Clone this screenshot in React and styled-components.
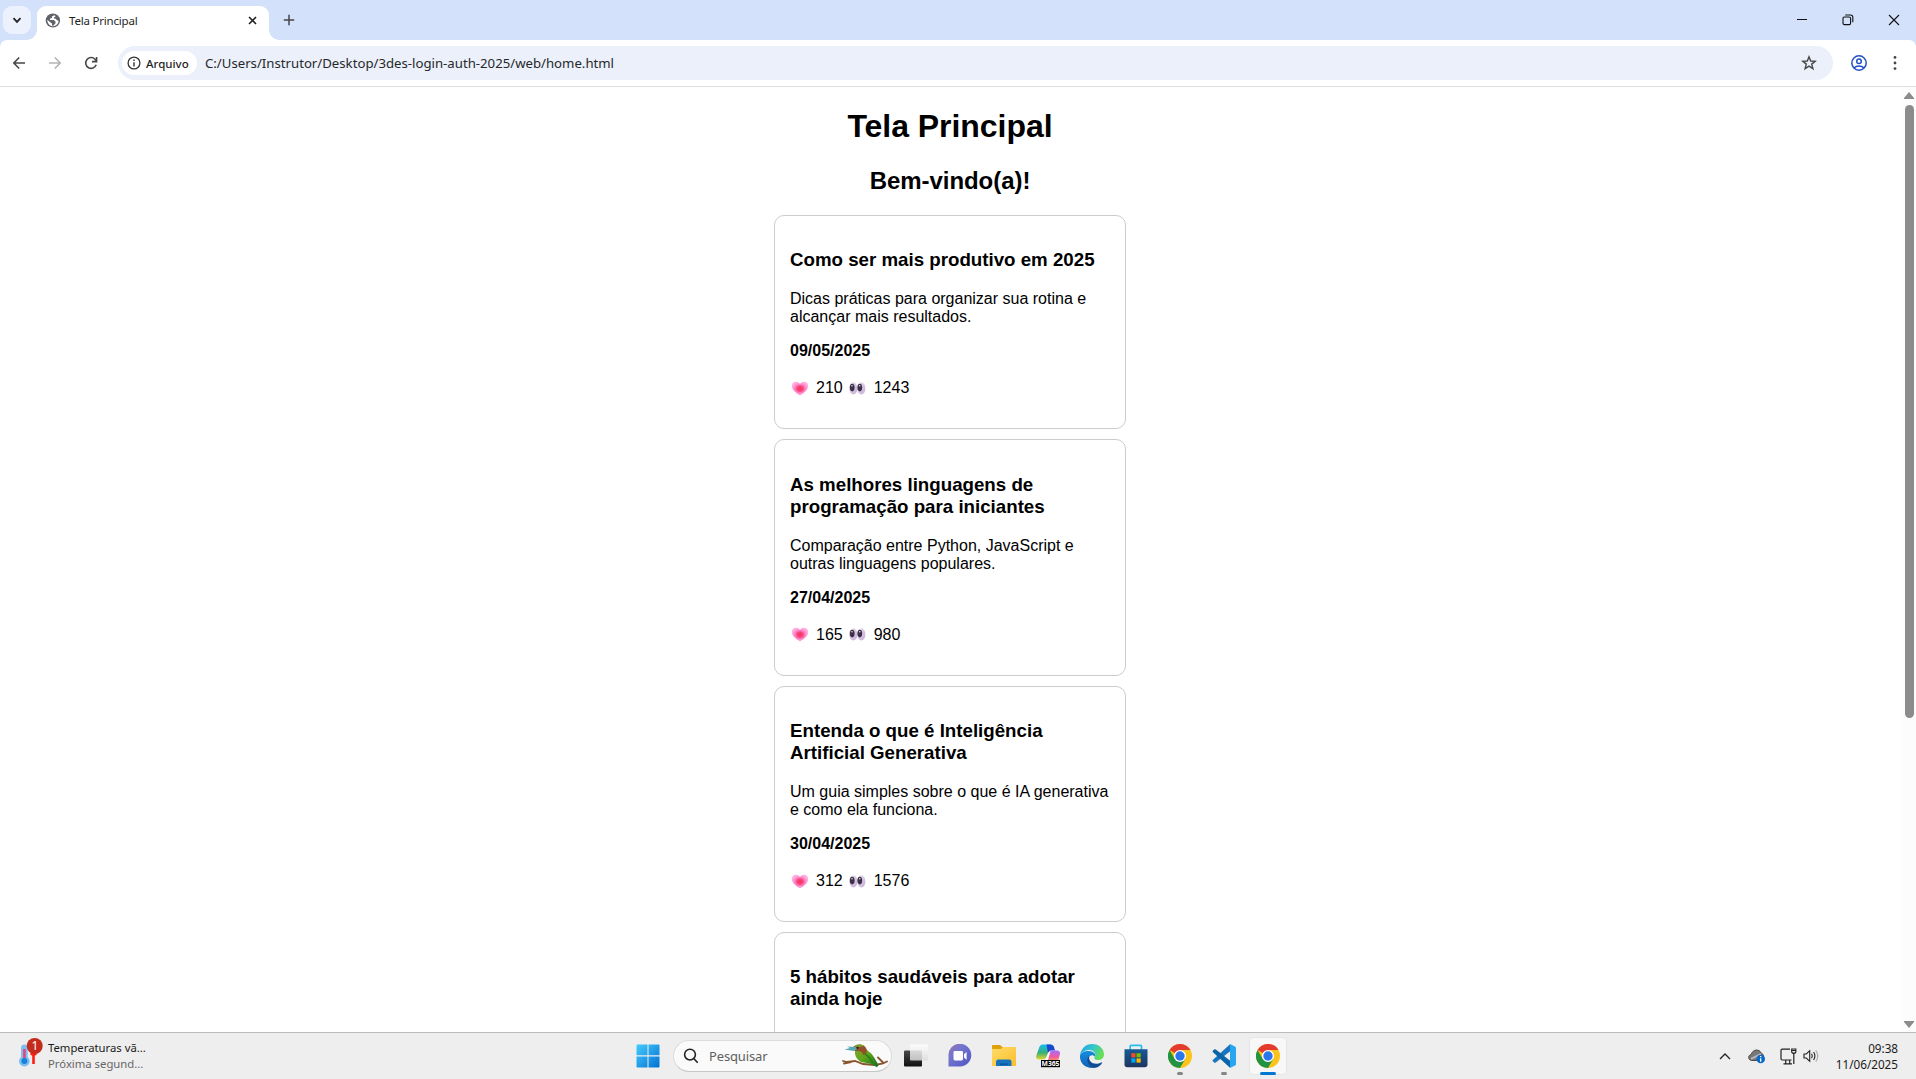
import React from "react";
import styled, { createGlobalStyle, css } from "styled-components";

const Global = createGlobalStyle`
  * { box-sizing: border-box; }
  html, body, #root { margin: 0; height: 100%; overflow: hidden; }
  body { background: #fff; font-family: "Liberation Sans", Arial, sans-serif; }
  svg { display: block; flex: none; }
`;

const ui = css`font-family: "Noto Sans", "Open Sans", sans-serif;`;

const Screen = styled.div`
  width: 1916px;
  height: 1079px;
  display: flex;
  flex-direction: column;
  overflow: hidden;
  background: #d3e1fb;
`;

/* Browser chrome */
const TabStrip = styled.div`
  ${ui}
  height: 40px;
  flex: none;
  display: flex;
  padding-left: 3px;
`;
const TabSearch = styled.div`
  width: 28px;
  height: 28px;
  margin-top: 6px;
  border-radius: 9px;
  background: #ecf2fd;
  display: grid;
  place-items: center;
`;
const Tab = styled.div`
  position: relative;
  width: 232px;
  height: 34px;
  margin: 6px 0 0 6px;
  padding: 0 12px 6px 8px;
  background: #fff;
  border-radius: 9px 9px 0 0;
  display: flex;
  align-items: center;
  &::before, &::after {
    content: "";
    position: absolute;
    bottom: 0;
    width: 10px;
    height: 10px;
  }
  &::before { left: -10px; background: radial-gradient(circle at 0 0, transparent 9.5px, #fff 10px); }
  &::after { right: -10px; background: radial-gradient(circle at 100% 0, transparent 9.5px, #fff 10px); }
`;
const TabTitle = styled.span`
  flex: 1;
  margin-left: 8px;
  font-size: 11.5px;
  line-height: 16px;
  letter-spacing: -0.2px;
  color: #1f1f1f;
  padding-top: 2px;
`;
const NewTab = styled.div`
  margin: 14px 0 0 14px;
`;
const WindowControls = styled.div`
  margin-left: auto;
  display: flex;
  gap: 34px;
  padding: 14px 16px 0 0;
`;
const Toolbar = styled.div`
  ${ui}
  height: 47px;
  flex: none;
  display: flex;
  align-items: center;
  border-bottom: 1px solid #dfdfe0;
  border-radius: 7px 7px 0 0;
  padding: 0 19px 0 11px;
  background: #fff;
`;
const ToolIcons = styled.div`
  display: flex;
  gap: 20px;
  width: 107px;
  flex: none;
`;
const Omnibox = styled.div`
  flex: 1;
  height: 34px;
  border-radius: 17px;
  background: #ebf0fa;
  display: flex;
  align-items: center;
  padding: 0 16px 0 4px;
`;
const SchemeChip = styled.span`
  height: 24px;
  width: 75px;
  border-radius: 12px;
  background: #fff;
  display: flex;
  align-items: center;
  gap: 5px;
  padding-left: 5px;
  font-size: 11.5px;
  font-weight: 500;
  color: #1f1f1f;
`;
const Url = styled.span`
  flex: 1;
  margin-left: 8px;
  font-size: 13.2px;
  color: #27282a;
`;
const Profile = styled.div`
  margin: 0 26px 0 18px;
`;

/* Page */
const Viewport = styled.div`
  flex: 1;
  min-height: 0;
  display: flex;
  background: #fff;
`;
const Main = styled.main`
  flex: 1;
  display: flex;
  flex-direction: column;
  align-items: center;
  overflow: hidden;
  padding-right: 2px;
  color: #000;
`;
const Title = styled.h1`
  font-size: 32px;
  line-height: 36px;
  letter-spacing: -0.05px;
  margin: 21px 0 0;
`;
const Welcome = styled.h2`
  font-size: 24px;
  line-height: 27px;
  letter-spacing: -0.05px;
  margin: 23px 0 21px;
`;
const Cards = styled.div`
  display: flex;
  flex-direction: column;
  gap: 10px;
  width: 352px;
`;
const Card = styled.article`
  border: 1px solid #ccc;
  border-radius: 10px;
  padding: 15px;
  flex: none;
`;
const CardTitle = styled.h3`
  font-size: 18.72px;
  line-height: 22px;
  margin: 18.2px 0 19.24px;
`;
const Text = styled.p`
  font-size: 16px;
  line-height: 18px;
  margin: 0 0 16px;
`;
const DateText = styled(Text)`
  font-weight: bold;
`;
const Stats = styled(Text)`
  display: flex;
  align-items: center;
  padding-top: 2px;
  line-height: 19px;
`;
const Count = styled.span`
  margin: 0 5px;
`;
const Scrollbar = styled.div`
  width: 14px;
  background: #fcfcfc;
  display: flex;
  flex-direction: column;
  align-items: center;
  padding: 5px 0 4px;
`;
const Thumb = styled.div`
  width: 9px;
  height: 613px;
  margin: 6px 0 auto;
  border-radius: 5px;
  background: #8b8b8b;
`;

/* Taskbar */
const Taskbar = styled.footer`
  ${ui}
  height: 47px;
  flex: none;
  display: grid;
  grid-template-columns: 626px 664px 1fr;
  border-top: 1px solid #bcbcbc;
  background: #eee;
`;
const Weather = styled.div`
  display: flex;
  padding: 5px 0 0 17px;
  gap: 4px;
`;
const Lines = styled.div`
  display: flex;
  flex-direction: column;
  font-size: ${(p) => (p.$clock ? 11.7 : 11.3)}px;
  line-height: 16px;
  padding-top: ${(p) => (p.$clock ? 0 : 2)}px;
  margin-top: ${(p) => (p.$clock ? -1 : 0)}px;
  white-space: nowrap;
  color: #1b1b1b;
  text-align: ${(p) => (p.$clock ? "right" : "left")};
`;
const Muted = styled.span`
  color: #666;
`;
const Apps = styled.div`
  display: flex;
  align-items: center;
`;
const AppSlot = styled.div`
  position: relative;
  width: 44px;
  height: 46px;
  flex: none;
  display: grid;
  place-items: center;
`;
const ActiveTile = styled.div`
  width: 38px;
  height: 38px;
  border-radius: 4px;
  background: #f8f8f8;
  border: 1px solid #e6e6e6;
  display: grid;
  place-items: center;
`;
const Indicator = styled.i`
  position: absolute;
  bottom: 4px;
  left: 50%;
  transform: translateX(-50%);
  width: ${(p) => (p.$active ? 16 : 6)}px;
  height: 3px;
  border-radius: 2px;
  background: ${(p) => (p.$active ? "#0078d4" : "#858585")};
`;
const Search = styled.div`
  width: 219px;
  height: 32px;
  margin: 0 2px 0 3px;
  border: 1px solid #dcdcdc;
  border-bottom-color: #c6c6c6;
  border-radius: 16px;
  background: #fafafa;
  display: flex;
  align-items: center;
  padding: 0 3px 0 9px;
`;
const Placeholder = styled.span`
  flex: 1;
  margin-left: 10px;
  font-size: 13px;
  letter-spacing: -0.15px;
  color: #606060;
`;
const Tray = styled.div`
  display: flex;
  justify-content: flex-end;
  align-items: center;
  padding-right: 18px;
`;
const TrayIcons = styled.div`
  display: flex;
  align-items: center;
  margin-right: 16px;
`;
const TraySlot = styled.div`
  margin-left: ${(p) => p.$gap || 0}px;
`;

const Heart = () => (
  <svg width="21" height="18" viewBox="0.5 0 21 18">
    <defs>
      <radialGradient id="heart">
        <stop offset="0" stopColor="#f5305c" />
        <stop offset=".4" stopColor="#f84a82" />
        <stop offset=".6" stopColor="#ff7fc4" />
        <stop offset="1" stopColor="#ffb0e0" />
      </radialGradient>
    </defs>
    <path d="M10.5 16.5C7 14.2 2.3 11.2 2.3 7C2.3 2.4 7.8 1.4 10.5 4.8C13.2 1.4 18.7 2.4 18.7 7C18.7 11.2 14 14.2 10.5 16.5Z" fill="url(#heart)" />
  </svg>
);
const Eyes = () => (
  <svg width="21" height="18" viewBox="1 0 21 18">
    <defs>
      <linearGradient id="eye" x2="1" y2="1">
        <stop offset="0" stopColor="#eee8f2" />
        <stop offset="1" stopColor="#c4a8d6" />
      </linearGradient>
    </defs>
    <ellipse cx="6.3" cy="9.4" rx="4.1" ry="6.1" fill="url(#eye)" />
    <ellipse cx="14.3" cy="9.4" rx="4.1" ry="6.1" fill="url(#eye)" />
    <ellipse cx="5.2" cy="8.6" rx="2.4" ry="3.8" fill="#3c3048" />
    <ellipse cx="12.8" cy="8.6" rx="2.4" ry="3.8" fill="#3c3048" />
    <circle cx="5" cy="6.8" r=".7" fill="#fff" />
    <circle cx="12.8" cy="6.8" r=".7" fill="#fff" />
  </svg>
);

const Line = ({ w = 16, h = w, box = `0 0 ${w} ${h}`, color = "#474747", sw = 1.6, d }) => (
  <svg width={w} height={h} viewBox={box} fill="none" stroke={color} strokeWidth={sw}>
    <path d={d} />
  </svg>
);

const Globe = () => (
  <svg width="16" height="15" viewBox="-.6 0 14 15" preserveAspectRatio="none">
    <ellipse cx="6.3" cy="7.5" rx="6.3" ry="7" fill="#5f6368" />
    <path d="M7.6 2.2L5.4 3.5L5.5 5L3.8 5.5V7H7L8.6 8.5V10.3L6.8 12.6L5.5 12.7V10.5L4 9.3L1.4 6.8C1.4 9.9 3 12.9 6 13.2C9.4 13.2 11.2 10.5 11.3 8L9.5 6.8L8.5 5.5H7.2V4.4L8.8 3.3Z" fill="#fff" />
  </svg>
);
const Info = () => (
  <svg width="14" height="14" viewBox="0 0 14 14">
    <circle cx="7" cy="7" r="5.9" fill="none" stroke="#333" strokeWidth="1.3" />
    <path d="M7 6.3V10.4M7 3.6V5" stroke="#333" strokeWidth="1.4" />
  </svg>
);
const UserIcon = () => (
  <svg width="16" height="16" viewBox="0 0 16 16" fill="none" stroke="#2350c4" strokeWidth="1.5">
    <circle cx="8" cy="8" r="7.2" />
    <circle cx="8" cy="6.2" r="2.3" />
    <path d="M3 13C5.5 10.4 10.5 10.4 13 13" />
  </svg>
);
const Kebab = () => (
  <svg width="4" height="16" viewBox="0 0 4 16" fill="#474747">
    <circle cx="2" cy="2.4" r="1.4" /><circle cx="2" cy="8" r="1.4" /><circle cx="2" cy="13.6" r="1.4" />
  </svg>
);
const RestoreIcon = () => (
  <svg width="12" height="12" viewBox="0 0 12 12" fill="none" stroke="#111" strokeWidth="1.1">
    <rect x="1" y="3" width="7.6" height="7.6" rx="1.3" />
    <path d="M3.2 1H8.6A2.2 2.2 0 0 1 10.8 3.2V8.3" />
  </svg>
);

const Thermo = () => (
  <svg width="27" height="32" viewBox="0 0 27 32">
    <path d="M4 10Q4 6.5 7.3 6.5Q10.7 6.5 10.7 10V19A5.3 5.3 0 1 1 4 19Z" fill="#7dbdf2" />
    <path d="M7.4 11V23" stroke="#e4467c" strokeWidth="2.6" />
    <circle cx="7.4" cy="23" r="3" fill="#1584da" />
    <path d="M16.5 14V26M14 17L16.5 13.5L19 17" stroke="#ff1e10" strokeWidth="2.6" fill="none" />
    <circle cx="17.7" cy="8" r="8" fill="#c42b1c" />
    <text x="18" y="12.4" fontSize="12" fill="#fff" textAnchor="middle" fontFamily="Noto Sans, sans-serif">1</text>
  </svg>
);
const Windows = () => (
  <svg width="24" height="24" viewBox="0 0 24 24">
    <defs><linearGradient id="win" gradientUnits="userSpaceOnUse" x1="0" y1="0" x2="24" y2="24"><stop stopColor="#46cdff" /><stop offset="1" stopColor="#006fd0" /></linearGradient></defs>
    <path d="M1.5 .5H11.5V11.3H.5V1.5Q.5.5 1.5.5ZM12.5.5H22.5Q23.5.5 23.5 1.5V11.3H12.5ZM.5 12.4H11.5V23.5H1.5Q.5 23.5.5 22.5ZM12.5 12.4H23.5V22.5Q23.5 23.5 22.5 23.5H12.5Z" fill="url(#win)" />
  </svg>
);
const Bird = () => (
  <svg width="46" height="24" viewBox="0 0 46 24">
    <defs><linearGradient id="bird" x2="1" y2="1"><stop stopColor="#8ba326" /><stop offset=".45" stopColor="#5ea51c" /><stop offset="1" stopColor="#126a20" /></linearGradient></defs>
    <path d="M1 17L5 18L13 17L21 20L33 21L41 19.5L45 17.5M2 19.5L9 18M36 13.5L41 18.5" stroke="#8a542f" strokeWidth="1.8" fill="none" strokeLinecap="round" />
    <path d="M13 6C17 2 24 3 26 7C31 10 33 15 36.5 21L35 23.3L31 21C28 19 23 19 19 18C14 15 12.5 11 13 6Z" fill="url(#bird)" />
    <path d="M11 3C15 0 22 0 24 4C26 8 24 11 21 11C21 7 17 7 13 7Z" fill="#92502c" />
    <path d="M13 1.5C16-.3 20 0 22 2L18 3L13 3Z" fill="#7b9b2e" />
    <path d="M14 3L5 2.5L8 4L2.5 5.5L12 7L15 5Z" fill="#56a8b5" />
    <circle cx="15.5" cy="3.8" r="1.1" fill="#221d17" />
    <path d="M23 10C27 12 28 15 31 19" stroke="#2e7b18" strokeWidth="1.5" fill="none" />
  </svg>
);
const TaskView = () => (
  <svg width="24" height="24" viewBox="0 0 24 24">
    <defs>
      <linearGradient id="tv" x2="0" y2="1"><stop stopColor="#484848" /><stop offset="1" stopColor="#111" /></linearGradient>
      <linearGradient id="tvf" x2="0" y2="1"><stop stopColor="#fff" /><stop offset="1" stopColor="#dcdcdc" /></linearGradient>
    </defs>
    <rect x="0" y="6.5" width="18" height="16" rx="1" fill="url(#tv)" />
    <rect x="6" y="0.5" width="18" height="16" rx="1" fill="url(#tvf)" opacity=".85" />
  </svg>
);
const Chat = () => (
  <svg width="24" height="24" viewBox="0 0 24 24">
    <defs><linearGradient id="chat" x2="1" y2="1"><stop stopColor="#9971a8" /><stop offset=".35" stopColor="#7377cd" /><stop offset="1" stopColor="#5052c4" /></linearGradient></defs>
    <path d="M.5 22.5V12A11.4 11.4 0 1 1 12 22.5Z" fill="url(#chat)" />
    <rect x="5.5" y="7" width="9.5" height="9.5" rx="1.4" fill="#fff" />
    <path d="M16 10.3L18.6 8V15.7L16 13.4Z" fill="#fff" />
  </svg>
);
const Folder = () => (
  <svg width="24" height="24" viewBox="0 0 24 24">
    <defs><linearGradient id="fold" x2="1" y2="1"><stop stopColor="#ffdc68" /><stop offset="1" stopColor="#fbbd2c" /></linearGradient></defs>
    <path d="M0 2Q0 1 1 1H8L10.5 3H24V10H0Z" fill="#e0a008" />
    <path d="M0 5H9L11 3H24V22H0Z" fill="url(#fold)" />
    <path d="M4 22V17.8Q4 15.5 6.3 15.5H17.2Q19.5 15.5 19.5 17.8V22Z" fill="#1673bd" />
    <path d="M8 20.2H15.5" stroke="#0b559f" strokeWidth="1.5" />
  </svg>
);
const M365 = () => (
  <svg width="24" height="24" viewBox="0 0 24 24">
    <defs>
      <linearGradient id="m1" x2="0" y2="1"><stop stopColor="#18bdf4" /><stop offset=".55" stopColor="#37af76" /><stop offset="1" stopColor="#e6d62b" /></linearGradient>
      <linearGradient id="m2" x2="0" y2="1"><stop stopColor="#a66dfa" /><stop offset=".6" stopColor="#ef5aa3" /><stop offset="1" stopColor="#ff9950" /></linearGradient>
    </defs>
    <path d="M6.5.5H15L11 12Q10 15.5 6 15.5H3Q-1 15.5.5 11L3 4Q4 .5 6.5.5Z" fill="url(#m1)" />
    <path d="M10.5.5H15Q17.3.5 18 3L19 6.5H15Q13 6.5 12 9Z" fill="#1748cf" />
    <path d="M15 6.5H21Q25 6.5 23.7 11L22 17H10L12 10Q13 6.5 15 6.5Z" fill="url(#m2)" />
    <path d="M12 9.5Q13 7 14.5 7L12 16H9Z" fill="#fff" />
    <rect x="5" y="16" width="19" height="7.2" fill="#000" />
    <text x="14.5" y="22.3" fontSize="7.4" fontWeight="700" textAnchor="middle" textLength="18" lengthAdjust="spacingAndGlyphs" fill="#fff" fontFamily="Noto Sans, sans-serif">M365</text>
  </svg>
);
const Edge = () => (
  <svg width="24" height="24" viewBox="0 0 24 24">
    <defs>
      <linearGradient id="e1" y2=".4"><stop stopColor="#219fe2" /><stop offset=".55" stopColor="#35c6cc" /><stop offset="1" stopColor="#66df56" /></linearGradient>
      <linearGradient id="e2" x2="0" y2="1"><stop stopColor="#168de0" /><stop offset="1" stopColor="#1360b3" /></linearGradient>
    </defs>
    <path d="M0 11.5C.7 4.8 5.8 0 12 0C19.5 0 24 5 24 10.2C24 14 21.5 16 18 16C15 16 13.7 14.8 14.7 13C17 8.6 12.5 5.5 8.4 6C4.6 6.3 1.4 8.5 0 11.5Z" fill="url(#e1)" />
    <path d="M0 11.5C1.4 8 5.5 6.8 9 7C14.2 7.2 16 10.5 14.8 12.7C13.8 10.5 9.5 10.5 8.3 14C7 18.8 10.3 22.2 13.7 23.8C5.5 24.8-.6 19 0 11.5Z" fill="url(#e2)" />
    <path d="M9.5 11.8C7.6 17 13 21 18.5 19.5C20.3 19 21.3 18 22 18.2C22.8 18.7 19.5 24 13.5 24C8.5 22.3 4.8 15.5 9.5 11.8Z" fill="#114a91" />
  </svg>
);
const Store = () => (
  <svg width="24" height="24" viewBox="0 0 24 24">
    <defs><linearGradient id="store" x2="0" y2="1"><stop stopColor="#185a96" /><stop offset="1" stopColor="#1d3460" /></linearGradient></defs>
    <path d="M6.2 6V2.3Q6.2 1.3 7.2 1.3H16.5Q17.5 1.3 17.5 2.3V6" fill="none" stroke="#25bdf0" strokeWidth="1.7" />
    <path d="M.5 5.2H23.5V20.5Q23.5 23.3 20.7 23.3H3.3Q.5 23.3.5 20.5Z" fill="url(#store)" />
    <path d="M7.3 9.2H11.5V13.4H7.3Z" fill="#f25022" /><path d="M12.5 9.2H16.7V13.4H12.5Z" fill="#7fba00" />
    <path d="M7.3 14.4H11.5V18.6H7.3Z" fill="#00a4ef" /><path d="M12.5 14.4H16.7V18.6H12.5Z" fill="#ffb900" />
  </svg>
);
const Chrome = () => (
  <svg width="24" height="24" viewBox="0 0 24 24">
    <circle cx="12" cy="12" r="12" fill="#fcc31a" />
    <path d="M12 12L1.6 6A12 12 0 0 1 22.4 6H12Z" fill="#e33b2e" />
    <path d="M1.6 6A12 12 0 0 0 12 24L17.2 15L12 12L6.8 15Z" fill="#229342" />
    <circle cx="12" cy="12" r="6" fill="#fff" />
    <circle cx="12" cy="12" r="4.7" fill="#2a76ec" />
  </svg>
);
const Code = () => (
  <svg width="24" height="24" viewBox="0 0 24 24">
    <path d="M18 .3L1 15.7Q0 16.6 1 17.4L2.2 18.4Q3 19 3.8 18.4L18.2 7.2Z" fill="#1976be" />
    <path d="M18 23.7L1 8.3Q0 7.4 1 6.6L2.2 5.6Q3 5 3.8 5.6L18.2 16.8Z" fill="#0b64a8" />
    <path d="M18 .1L23 2.5Q24 3 24 4V20Q24 21 23 21.5L18 23.9Z" fill="#2aa5ef" />
  </svg>
);
const Cloud = () => (
  <svg width="18" height="16" viewBox="0 0 18 16">
    <path d="M3.5 12.5C-.2 11.8-.3 7.2 3.3 6.4C4.5 1.2 11.4.4 13.2 5.2C16 6 16.5 10 14.5 12.5Z" fill="#777" stroke="#4a4a4a" />
    <path d="M3 10.8L13 6" stroke="#b5b5b5" strokeWidth="2" />
    <circle cx="12.7" cy="11" r="4.3" fill="#0869c9" />
    <path d="M12.7 10.2V13.8M12.7 8V9.2" stroke="#fff" strokeWidth="1.3" />
  </svg>
);
const Network = () => (
  <svg width="17" height="17" viewBox="0 0 17 17" fill="none" stroke="#222" strokeWidth="1.2">
    <path d="M10 1.2H2.2Q1 1.2 1 2.4V10.8Q1 12 2.2 12H11.5M5.7 12V15.5M9.7 12V15.5M3.5 15.8H12" />
    <path d="M11.7 1H15.8V4L15 5.2H12.5L11.7 4ZM13.8 5.2V16M11.8 2.5H15.8" />
  </svg>
);
const Speaker = () => (
  <svg width="17" height="14" viewBox="0 0 17 14" fill="none" stroke="#222" strokeWidth="1.1">
    <path d="M1 5H3.3L6.7 1.7V12.3L3.3 9H1ZM8.6 4.8Q10 7 8.6 9.2M10.6 3Q13.2 7 10.6 11" />
    <path d="M12.8 1.2Q16.8 7 12.8 12.8" stroke="#aaa" />
  </svg>
);

const posts = [
  { title: "Como ser mais produtivo em 2025", text: "Dicas práticas para organizar sua rotina e alcançar mais resultados.", date: "09/05/2025", likes: 210, views: 1243 },
  { title: "As melhores linguagens de programação para iniciantes", text: "Comparação entre Python, JavaScript e outras linguagens populares.", date: "27/04/2025", likes: 165, views: 980 },
  { title: "Entenda o que é Inteligência Artificial Generativa", text: "Um guia simples sobre o que é IA generativa e como ela funciona.", date: "30/04/2025", likes: 312, views: 1576 },
  { title: "5 hábitos saudáveis para adotar ainda hoje" },
];

const apps = [
  { Icon: TaskView }, { Icon: Chat }, { Icon: Folder }, { Icon: M365 }, { Icon: Edge }, { Icon: Store },
  { Icon: Chrome, open: true }, { Icon: Code, open: true }, { Icon: Chrome, active: true },
];

export default function App() {
  return (
    <Screen>
      <Global />
      <TabStrip>
        <TabSearch><Line w={10} h={7} d="M1.5 1.2L5 4.9L8.5 1.2" color="#222" sw={1.8} /></TabSearch>
        <Tab>
          <Globe />
          <TabTitle>Tela Principal</TabTitle>
          <Line w={9} h={9} d="M1 1L8 8M8 1L1 8" color="#222" sw={1.6} />
        </Tab>
        <NewTab><Line w={12} d="M6 .8V11.2M.8 6H11.2" sw={1.5} /></NewTab>
        <WindowControls>
          <Line w={12} d="M1 5.5H11" color="#111" sw={1} />
          <RestoreIcon />
          <Line w={12} d="M1 1L11 11M11 1L1 11" color="#111" sw={1.1} />
        </WindowControls>
      </TabStrip>
      <Toolbar>
        <ToolIcons>
          <Line d="M8.2 2.5L2.8 8L8.2 13.5M3 8H14" />
          <Line d="M7.8 2.5L13.2 8L7.8 13.5M2 8H13" color="#b4b4b4" />
          <Line d="M13.2 9.8A5.4 5.4 0 1 1 12 4.2L13.4 5.8M13.6 2V6.6H9" sw={1.6} />
        </ToolIcons>
        <Omnibox>
          <SchemeChip><Info />Arquivo</SchemeChip>
          <Url>C:/Users/Instrutor/Desktop/3des-login-auth-2025/web/home.html</Url>
          <Line w={16} d="M8 1.8L9.7 6L14.2 6.3L10.7 9.1L11.9 13.6L8 11.1L4.1 13.6L5.3 9.1L1.8 6.3L6.3 6Z" sw={1.4} />
        </Omnibox>
        <Profile><UserIcon /></Profile>
        <Kebab />
      </Toolbar>
      <Viewport>
        <Main>
          <Title>Tela Principal</Title>
          <Welcome>Bem-vindo(a)!</Welcome>
          <Cards>
            {posts.map((p) => (
              <Card key={p.title}>
                <CardTitle>{p.title}</CardTitle>
                {p.text && (
                  <>
                    <Text>{p.text}</Text>
                    <DateText>{p.date}</DateText>
                    <Stats>
                      <Heart /><Count>{p.likes}</Count><Eyes /><Count>{p.views}</Count>
                    </Stats>
                  </>
                )}
                {!p.text && <Text>&nbsp;</Text>}
              </Card>
            ))}
          </Cards>
        </Main>
        <Scrollbar>
          <svg width="10" height="7" viewBox="0 0 10 7"><path d="M5 0L10 6V7H0V6Z" fill="#8b8b8b" /></svg>
          <Thumb />
          <svg width="10" height="7" viewBox="0 0 10 7"><path d="M0 0H10V1L5 7L0 1Z" fill="#8b8b8b" /></svg>
        </Scrollbar>
      </Viewport>
      <Taskbar>
        <Weather>
          <Thermo />
          <Lines><span>Temperaturas vã...</span><Muted>Próxima segund...</Muted></Lines>
        </Weather>
        <Apps>
          <AppSlot><Windows /></AppSlot>
          <Search>
            <Line w={16} d="M7 1.2A5.4 5.4 0 1 0 7 12A5.4 5.4 0 1 0 7 1.2M11 10.8L14.7 14.7" color="#222" sw={1.6} />
            <Placeholder>Pesquisar</Placeholder>
            <Bird />
          </Search>
          {apps.map(({ Icon, open, active }, i) => (
            <AppSlot key={i}>
              {active ? <ActiveTile><Icon /></ActiveTile> : <Icon />}
              {(open || active) && <Indicator $active={active} />}
            </AppSlot>
          ))}
        </Apps>
        <Tray>
          <TrayIcons>
            <TraySlot><Line w={12} h={8} d="M1 7L6 2L11 7" color="#222" sw={1.3} /></TraySlot>
            <TraySlot $gap={17}><Cloud /></TraySlot>
            <TraySlot $gap={14}><Network /></TraySlot>
            <TraySlot $gap={6}><Speaker /></TraySlot>
          </TrayIcons>
          <Lines $clock><span>09:38</span><span>11/06/2025</span></Lines>
        </Tray>
      </Taskbar>
    </Screen>
  );
}
